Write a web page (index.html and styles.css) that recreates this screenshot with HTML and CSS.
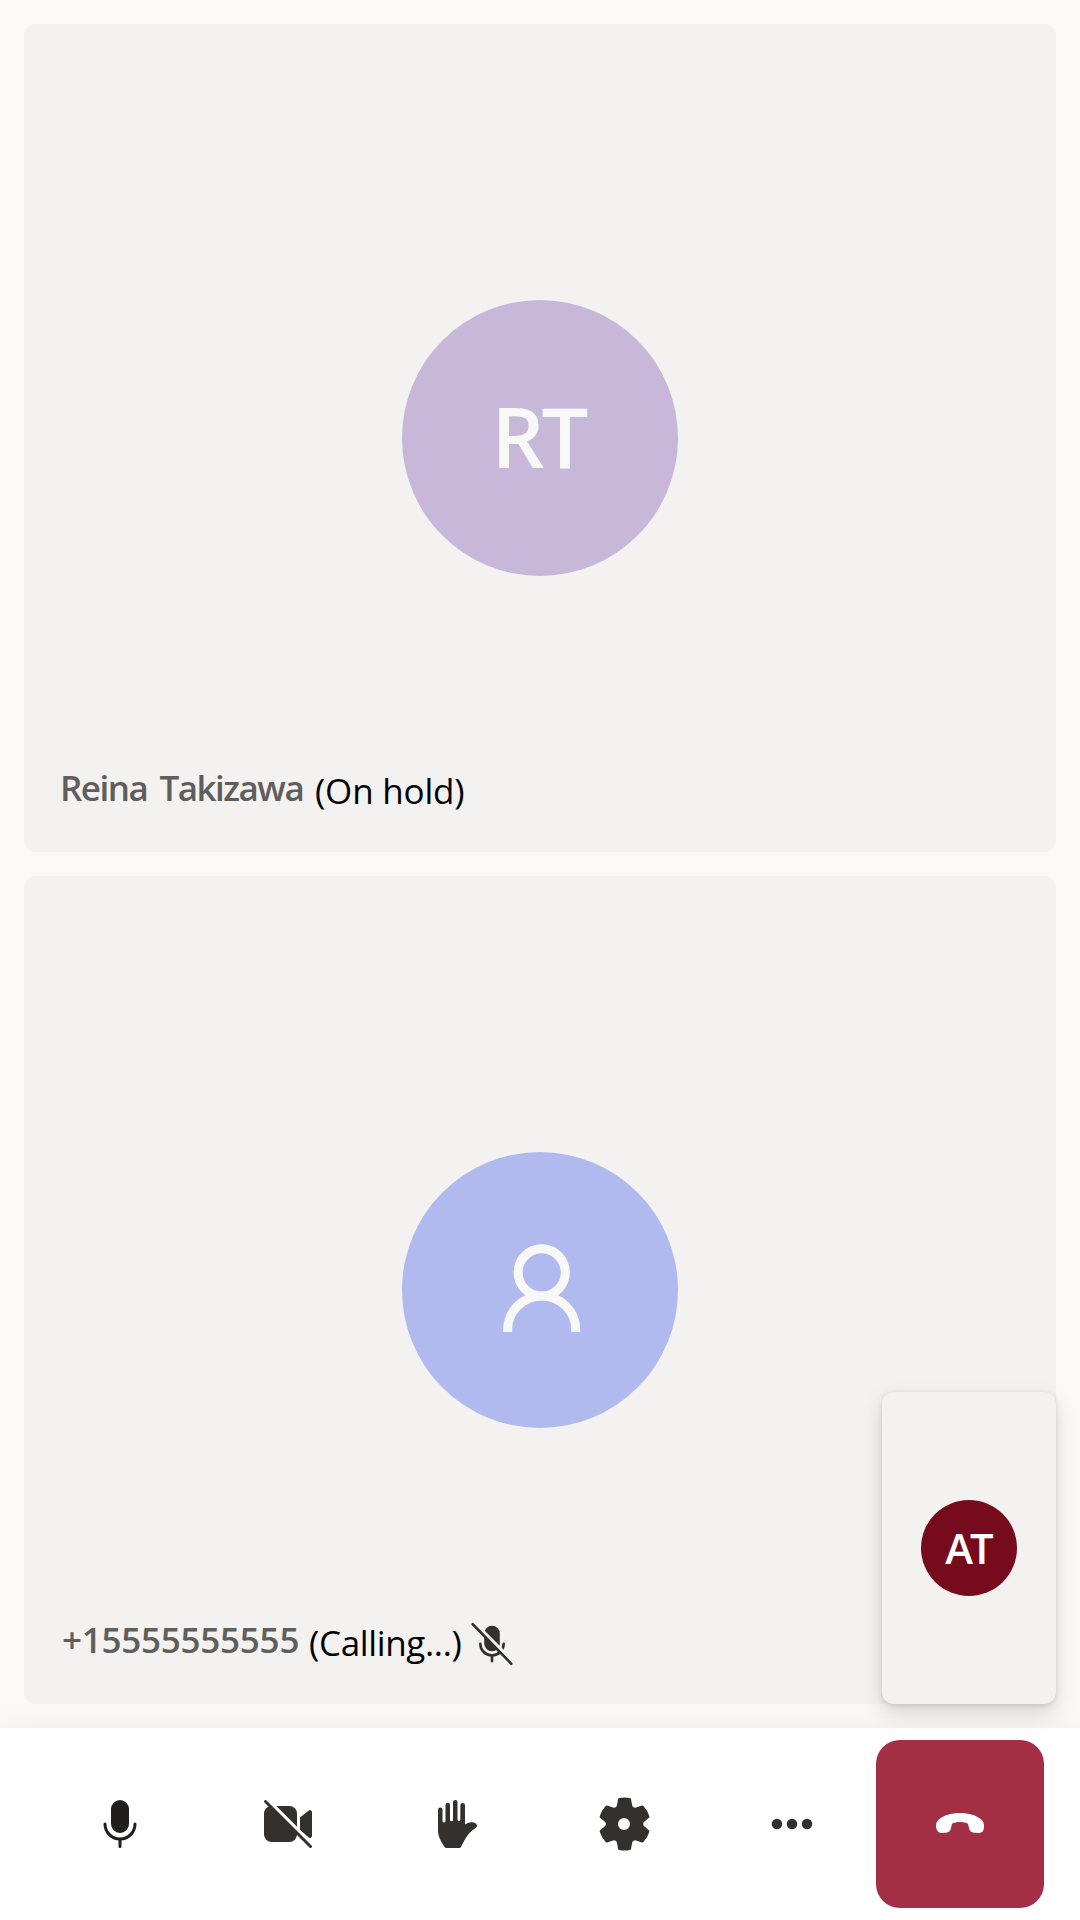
FILE: index.html
```html
<!DOCTYPE html>
<html lang="en">
<head>
<meta charset="utf-8">
<title>Call</title>
<link rel="stylesheet" href="styles.css">
</head>
<body>
<main class="gallery">
  <section class="tile">
    <div class="avatar avatar-lilac"><span class="initials">RT</span></div>
    <div class="label">
      <span class="name">Reina Takizawa</span>
      <span class="status">(On hold)</span>
    </div>
  </section>
  <section class="tile">
    <div class="avatar avatar-blue">
      <svg class="person" viewBox="0 0 96 96" aria-hidden="true">
        <circle cx="49.7" cy="30.4" r="23.6"/>
        <path d="M15.6 90v-2a34.1 34.1 0 0 1 68.2 0v2"/>
      </svg>
    </div>
    <div class="label">
      <span class="name phone">+15555555555</span>
      <span class="status calling">(Calling...)</span>
      <svg class="muted" viewBox="0 0 20 20" aria-hidden="true">
        <clipPath id="mic-cut"><path d="M2.3 0H20V17.7ZM0 0V20H20Z"/></clipPath>
        <g clip-path="url(#mic-cut)">
          <rect x="7" y="3" width="6" height="9.8" rx="3"/>
          <path class="line" d="M5.5 9.9a4.5 4.5 0 0 0 9 0M10 14.4v2.2"/>
        </g>
        <path class="line" d="M2.6 2.4 17.4 17.6"/>
      </svg>
    </div>
  </section>
  <aside class="self">
    <div class="avatar avatar-self"><span class="initials">AT</span></div>
  </aside>
</main>
<nav class="controls">
  <button class="control" aria-label="Mute">
    <svg class="icon icon-dark" viewBox="0 0 20 20"><path d="M10 13a3 3 0 0 0 3-3V5a3 3 0 0 0-6 0v5a3 3 0 0 0 3 3ZM5.5 10a.5.5 0 0 0-1 0 5.5 5.5 0 0 0 5 5.48v2.02a.5.5 0 0 0 1 0v-2.02a5.5 5.5 0 0 0 5-5.48.5.5 0 0 0-1 0 4.5 4.5 0 1 1-9 0Z"/></svg>
  </button>
  <button class="control" aria-label="Turn on camera">
    <svg class="icon" viewBox="0 0 20 20">
      <clipPath id="video-cut"><path d="M2.1 0H20V17.9ZM0 0V20H20Z"/></clipPath>
      <g clip-path="url(#video-cut)">
        <rect x="2" y="4" width="11" height="12" rx="2.5"/>
        <path d="M14 7.8l2.9-2.3a.7.7 0 0 1 1.1.6v7.9a.7.7 0 0 1-1.1.5L14 12Z"/>
      </g>
      <path class="line" d="M2.5 2.5l15 15"/>
    </svg>
  </button>
  <button class="control" aria-label="Raise hand">
    <svg class="icon" viewBox="0 0 20 20"><path d="M9 2.75a.75.75 0 0 1 1.5 0V8.6a.45.45 0 0 0 .95 0V3.7a.78.78 0 0 1 1.55 0v6.5c.6-.5 1.3-.8 2.1-.8 1.1 0 1.9.5 1.9 1.2 0 .45-.35.7-.9 1.05-1.3.85-2.3 2-3.1 3.45-.55 1-.9 1.8-1.3 2.45-.2.35-.4.45-.8.45H7c-.45 0-.65-.1-.85-.45C4.8 15.7 4 13.9 4 12.3V5.25a.75.75 0 0 1 1.5 0V9a.5.5 0 0 0 1 0V3.65a.75.75 0 0 1 1.5 0V8.6a.5.5 0 0 0 1 0Z"/></svg>
  </button>
  <button class="control" aria-label="Settings">
    <svg class="icon" viewBox="0 0 20 20"><path d="M1.91 7.38a8.5 8.5 0 0 1 1.96-3.4.5.5 0 0 1 .54-.13l1.92.68a1 1 0 0 0 1.32-.76l.36-2a.5.5 0 0 1 .4-.4 8.53 8.53 0 0 1 3.55 0c.2.04.35.2.38.4l.37 2a1 1 0 0 0 1.32.76l1.92-.68a.5.5 0 0 1 .54.13 8.5 8.5 0 0 1 1.96 3.4.5.5 0 0 1-.15.54l-1.56 1.32a1 1 0 0 0 0 1.52l1.56 1.32a.5.5 0 0 1 .15.54 8.5 8.5 0 0 1-1.96 3.4.5.5 0 0 1-.54.13l-1.92-.68a1 1 0 0 0-1.32.76l-.37 2a.5.5 0 0 1-.38.4 8.53 8.53 0 0 1-3.56 0 .5.5 0 0 1-.39-.4l-.36-2a1 1 0 0 0-1.32-.76l-1.92.68a.5.5 0 0 1-.54-.13 8.5 8.5 0 0 1-1.96-3.4.5.5 0 0 1 .15-.54l1.56-1.32a1 1 0 0 0 0-1.52L2.06 7.92a.5.5 0 0 1-.15-.54ZM8 10a2 2 0 1 0 4 0 2 2 0 0 0-4 0Z"/></svg>
  </button>
  <button class="control" aria-label="More">
    <svg class="icon" viewBox="0 0 20 20"><circle cx="5" cy="10" r="1.75"/><circle cx="10" cy="10" r="1.75"/><circle cx="15" cy="10" r="1.75"/></svg>
  </button>
  <button class="control end" aria-label="Leave">
    <svg class="icon" viewBox="0 0 20 20"><path d="M10 6.3c3 0 5.5.8 7 2.1.8.7 1 1.4 1 2.3 0 1.5-.5 2.3-1.7 2.3l-1.6-.1c-1-.1-1.4-.4-1.6-1.2l-.4-1.5c-.1-.3-.2-.4-.5-.5-.6-.3-1.4-.4-2.2-.4s-1.6.1-2.2.4c-.3.1-.4.2-.5.5l-.4 1.5c-.2.8-.6 1.1-1.6 1.2L3.9 13C2.6 13 2 11.8 2 10.5c0-.8.3-1.5 1-2.1C4.5 7.1 7 6.3 10 6.3Z"/></svg>
  </button>
</nav>
</body>
</html>
```
FILE: styles.css
```css
* { box-sizing: border-box; }
body {
  margin: 0;
  height: 1920px;
  display: flex;
  flex-direction: column;
  background: #faf9f8;
  font-family: "Open Sans", "Noto Sans", sans-serif;
  overflow: hidden;
}
.gallery {
  position: relative;
  flex: 1;
  display: grid;
  grid-template-rows: 1fr 1fr;
  gap: 24px;
  padding: 24px;
}
.tile {
  display: grid;
  grid-template-areas: "stack";
  background: #f3f2f1;
  border-radius: 12px;
}
.tile > * { grid-area: stack; }
.avatar {
  place-self: center;
  width: 276px;
  height: 276px;
  border-radius: 50%;
  display: flex;
  align-items: center;
  justify-content: center;
  color: #f8f9f7;
  font-size: 83px;
  font-weight: 600;
  line-height: 1;
}
.avatar-lilac {
  padding: 0 3px 5px 0;
  background: #c7b8da;
}
.avatar-blue { background: #b1baef; }
.avatar-lilac .initials { letter-spacing: -3px; }
.person {
  width: 96px;
  height: 96px;
  fill: none;
  stroke: #f8f9f7;
  stroke-width: 9;
}
.label {
  place-self: end start;
  display: flex;
  align-items: center;
  height: 72px;
  margin: 0 0 25px 36px;
  font-size: 35px;
  line-height: 48px;
  white-space: nowrap;
}
.name {
  width: 246px;
  margin-bottom: 6px;
  color: #605e5c;
  font-weight: 600;
  letter-spacing: -1.5px;
  word-spacing: 4.5px;
}
.phone {
  width: 240px;
  padding-left: 2px;
  letter-spacing: -0.25px;
}
.status {
  margin-left: 9px;
  color: #000;
  letter-spacing: -0.2px;
}
.calling {
  width: 157px;
  letter-spacing: -0.35px;
}
.muted {
  width: 52px;
  height: 52px;
  margin-top: 2px;
  fill: #323130;
}
.line {
  fill: none;
  stroke: #323130;
  stroke-width: 1;
  stroke-linecap: round;
}
.self {
  position: absolute;
  z-index: 2;
  right: 24px;
  bottom: 24px;
  width: 174px;
  height: 312px;
  display: grid;
  background: #f3f2f1;
  border-radius: 12px;
  box-shadow: 0 9.6px 21.6px rgba(0, 0, 0, .132), 0 1.8px 5.4px rgba(0, 0, 0, .108);
}
.avatar-self {
  width: 96px;
  height: 96px;
  padding: 0 2px 1px 0;
  background: #750b1c;
  color: #fff;
  font-size: 42px;
}
.avatar-self .initials { letter-spacing: -3px; }
.controls {
  height: 192px;
  display: flex;
  justify-content: flex-end;
  padding: 12px 36px;
  background: #fff;
  box-shadow: 0 19.2px 43.2px rgba(0, 0, 0, .132);
}
.control {
  width: 168px;
  height: 168px;
  display: flex;
  align-items: center;
  justify-content: center;
  padding: 0;
  border: 0;
  border-radius: 24px;
  background: transparent;
}
.icon {
  width: 60px;
  height: 60px;
  fill: #323130;
}
.icon-dark { fill: #201f1e; }
.end { background: #a42e43; }
.end .icon { fill: #fff; }
```
